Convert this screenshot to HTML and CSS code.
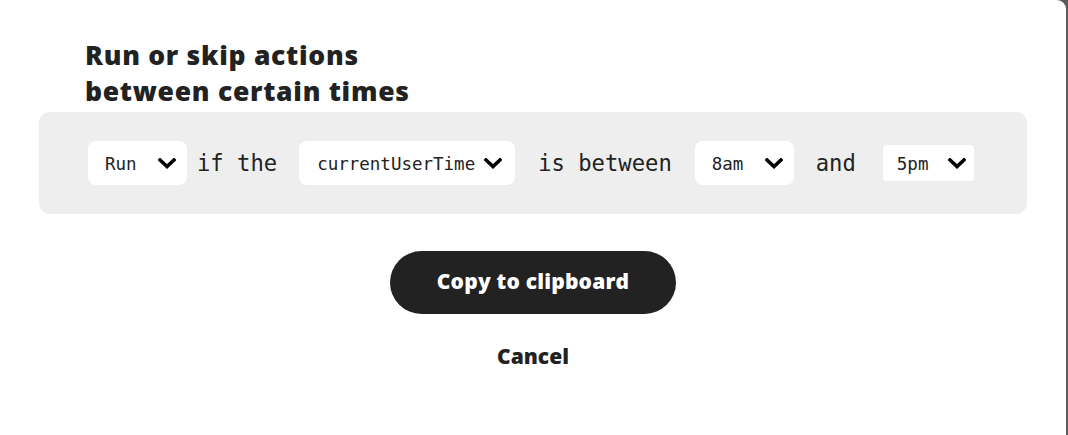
FILE: index.html
```html
<!DOCTYPE html>
<html>
<head>
<meta charset="utf-8">
<link rel="stylesheet" href="styles.css">
</head>
<body>
<div class="modal">
  <h1 class="title">Run or skip actions<br>between certain times</h1>
  <div class="rule-box">
    <div class="select sel-run"><span class="sel-text">Run</span><svg class="chev" viewBox="0 0 18 11"><polyline points="2,2 9,8.5 16,2"/></svg></div>
    <span class="word w-if">if the</span>
    <div class="select sel-var"><span class="sel-text">currentUserTime</span><svg class="chev" viewBox="0 0 18 11"><polyline points="2,2 9,8.5 16,2"/></svg></div>
    <span class="word w-between">is between</span>
    <div class="select sel-start"><span class="sel-text">8am</span><svg class="chev" viewBox="0 0 18 11"><polyline points="2,2 9,8.5 16,2"/></svg></div>
    <span class="word w-and">and</span>
    <div class="select sel-end"><span class="sel-text">5pm</span><svg class="chev" viewBox="0 0 18 11"><polyline points="2,2 9,8.5 16,2"/></svg></div>
  </div>
  <div class="actions">
    <button class="btn-copy">Copy to clipboard</button>
    <button class="btn-cancel">Cancel</button>
  </div>
</div>
</body>
</html>
```

FILE: styles.css
```css
html, body {
  margin: 0;
  padding: 0;
  height: 100%;
}
body {
  background: #5a5a5a;
  overflow: hidden;
}
.modal {
  width: 1066px;
  height: 435px;
  background: #ffffff;
  border-radius: 0 9px 0 0;
  box-sizing: border-box;
  padding: 0 39px;
  font-family: "Open Sans", "Lato", sans-serif;
  color: #222222;
}
.title {
  margin: 0;
  padding: 37px 0 0 46px;
  font-size: 26.5px;
  line-height: 36px;
  font-weight: 800;
  letter-spacing: 0.72px;
  height: 75px;
}
.rule-box {
  background: #eeeeee;
  border-radius: 11px;
  height: 102px;
  display: flex;
  align-items: center;
  padding: 0 0 0 49px;
  font-family: "DejaVu Sans Mono", monospace;
  margin-top: 0;
}
.select {
  background: #ffffff;
  border-radius: 8px;
  height: 44px;
  box-sizing: border-box;
  display: flex;
  align-items: center;
  justify-content: space-between;
  padding: 0 11px 0 17px;
  font-size: 17.5px;
  color: #222;
}
.sel-run { width: 99px; }
.sel-var { width: 216px; padding-left: 18px; padding-right: 13px; }
.sel-start { width: 99px; }
.sel-end { width: 91px; height: 36px; border-radius: 4px; padding-left: 14px; padding-right: 8px; }
.sel-text { display: block; padding-top: 2px; }
.chev {
  width: 18px;
  height: 11px;
  display: block;
}
.chev polyline {
  fill: none;
  stroke: #000;
  stroke-width: 3.6;
  stroke-linecap: square;
  stroke-linejoin: miter;
}
.word {
  font-size: 22.2px;
  color: #222;
  white-space: pre;
}
.w-if { margin: 0 22px 0 10px; }
.w-between { margin: 0 23px 0 23px; }
.w-and { margin: 0 27px 0 22px; }
.actions {
  display: flex;
  flex-direction: column;
  align-items: center;
  padding-top: 37px;
}
.btn-copy {
  width: 286px;
  height: 63px;
  border-radius: 32px;
  border: none;
  background: #222222;
  color: #ffffff;
  font-family: "Open Sans", "Lato", sans-serif;
  font-weight: 800;
  font-size: 21px;
  letter-spacing: 0.2px;
  padding: 0 0 3px 0;
}
.btn-cancel {
  margin-top: 28px;
  border: none;
  background: none;
  color: #222222;
  font-family: "Open Sans", "Lato", sans-serif;
  font-weight: 800;
  font-size: 21px;
  padding: 0;
}
```
